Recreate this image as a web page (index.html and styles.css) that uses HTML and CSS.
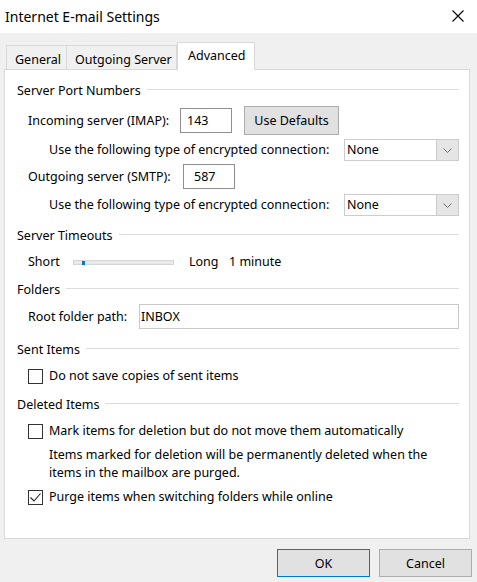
FILE: index.html
```html
<!DOCTYPE html>
<html>
<head>
<meta charset="utf-8">
<link rel="stylesheet" href="styles.css">
</head>
<body>
<div class="window">
  <div class="titlebar">
    <span class="title">Internet E-mail Settings</span>
    <svg class="close" width="12" height="12" viewBox="0 0 12 12"><path d="M0.5 0.5 L11.5 11.5 M11.5 0.5 L0.5 11.5" stroke="#000" stroke-width="1.1" fill="none"/></svg>
  </div>
  <div class="tabs">
    <div class="tab tab-general">General</div>
    <div class="tab tab-outgoing">Outgoing Server</div>
    <div class="tab tab-active">Advanced</div>
  </div>
  <div class="panel">
    <div class="group-title"><span>Server Port Numbers</span><i class="rule"></i></div>
    <div class="row row-incoming">
      <span class="label label-in">Incoming server (IMAP):</span>
      <div class="input port port-in">143</div>
      <div class="button defaults">Use Defaults</div>
    </div>
    <div class="row row-enc1">
      <span class="label">Use the following type of encrypted connection:</span>
      <div class="select"><span class="select-text">None</span><span class="select-arrow"><svg width="9" height="5" viewBox="0 0 9 5"><path d="M0.5 0.5 L4.5 4.5 L8.5 0.5" stroke="#6d6d6d" fill="none" stroke-width="1"/></svg></span></div>
    </div>
    <div class="row row-outgoing">
      <span class="label label-out">Outgoing server (SMTP):</span>
      <div class="input port port-out">587</div>
    </div>
    <div class="row row-enc2">
      <span class="label">Use the following type of encrypted connection:</span>
      <div class="select"><span class="select-text">None</span><span class="select-arrow"><svg width="9" height="5" viewBox="0 0 9 5"><path d="M0.5 0.5 L4.5 4.5 L8.5 0.5" stroke="#6d6d6d" fill="none" stroke-width="1"/></svg></span></div>
    </div>

    <div class="group-title gt-timeouts"><span>Server Timeouts</span><i class="rule"></i></div>
    <div class="row row-slider">
      <span class="label label-short">Short</span>
      <div class="track"><span class="thumb"></span></div>
      <span class="label label-long">Long</span>
      <span class="label">1 minute</span>
    </div>

    <div class="group-title gt-folders"><span>Folders</span><i class="rule"></i></div>
    <div class="row row-root">
      <span class="label label-root">Root folder path:</span>
      <div class="input root-input">INBOX</div>
    </div>

    <div class="group-title gt-sent"><span>Sent Items</span><i class="rule"></i></div>
    <div class="row row-check row-cb1">
      <span class="checkbox"></span>
      <span class="label">Do not save copies of sent items</span>
    </div>

    <div class="group-title gt-deleted"><span>Deleted Items</span><i class="rule"></i></div>
    <div class="row row-check row-cb2">
      <span class="checkbox"></span>
      <span class="label">Mark items for deletion but do not move them automatically</span>
    </div>
    <p class="note">Items marked for deletion will be permanently deleted when the<br>items in the mailbox are purged.</p>
    <div class="row row-check row-cb3">
      <span class="checkbox checked"><svg width="13" height="13" viewBox="0 0 13 13"><path d="M1.5 6.5 L5 10 L11.5 2.5" stroke="#222" stroke-width="1.1" fill="none"/></svg></span>
      <span class="label">Purge items when switching folders while online</span>
    </div>
  </div>
  <div class="footer">
    <div class="button btn-ok">OK</div>
    <div class="button btn-cancel">Cancel</div>
  </div>
</div>
</body>
</html>
```
FILE: styles.css
```css
html, body {
  margin: 0;
  padding: 0;
}
body {
  width: 477px;
  height: 582px;
  background: #f0f0f0;
  font-family: "Noto Sans", "Open Sans", sans-serif;
  font-size: 12.5px;
  color: #000;
  overflow: hidden;
}
.window {
  width: 477px;
  height: 582px;
  display: flex;
  flex-direction: column;
}
.titlebar {
  height: 33px;
  background: #fff;
  display: flex;
  align-items: center;
  padding-left: 5px;
  padding-right: 13px;
  flex-shrink: 0;
}
.title {
  font-size: 14px;
  flex: 1;
  padding-bottom: 1px;
}
.close {
  display: block;
  margin-top: -2px;
}
.tabs {
  display: flex;
  align-items: flex-end;
  margin-top: 9px;
  margin-left: 6px;
  height: 27px;
  flex-shrink: 0;
}
.tab {
  box-sizing: border-box;
  height: 24px;
  border: 1px solid #d9d9d9;
  border-bottom: none;
  background: #f0f0f0;
  padding: 5px 0 0 8px;
  line-height: 18px;
}
.tab-general {
  width: 61px;
}
.tab-outgoing {
  width: 110px;
  border-left: none;
}
.tab-active {
  position: relative;
  z-index: 1;
  width: 78px;
  height: 28px;
  margin-bottom: -1px;
  background: #fff;
  padding: 4px 0 0 10px;
}
.panel {
  box-sizing: border-box;
  margin-left: 4px;
  width: 466px;
  height: 470px;
  background: #fff;
  border: 1px solid #d9d9d9;
  padding: 12px 10px 0 12px;
  flex-shrink: 0;
}
.group-title {
  display: flex;
  align-items: center;
  height: 18px;
  line-height: 18px;
}
.group-title span {
  margin-right: 6px;
}
.rule {
  flex: 1;
  height: 0;
  border-top: 1px solid #dcdcdc;
  margin-top: -3px;
}
.row {
  display: flex;
  align-items: center;
  padding-left: 11px;
}
.label {
  white-space: nowrap;
  line-height: 18px;
}
.row-incoming {
  margin-top: 5px;
  height: 30px;
}
.label-in {
  width: 152px;
  padding-top: 2px;
}
.label-out {
  width: 155px;
  padding-top: 1px;
}
.input {
  box-sizing: border-box;
  height: 25px;
  border: 1px solid #8f8f8f;
  background: #fff;
  line-height: 23px;
}
.port {
  width: 52px;
}
.port-in {
  padding-left: 6px;
}
.port-out {
  padding-left: 10px;
}
.button {
  box-sizing: border-box;
  border: 1px solid #adadad;
  background: #e1e1e1;
  display: flex;
  align-items: center;
  justify-content: center;
}
.defaults {
  margin-left: 12px;
  width: 95px;
  height: 29px;
}
.row-enc1 {
  margin-top: 4px;
  height: 22px;
  padding-left: 32px;
}
.row-enc2 {
  margin-top: 5px;
  height: 22px;
  padding-left: 32px;
}
.select {
  margin-left: auto;
  box-sizing: border-box;
  width: 115px;
  height: 22px;
  border: 1px solid #cccccc;
  display: flex;
  background: #fff;
}
.select-text {
  flex: 1;
  padding-left: 2px;
  line-height: 20px;
}
.select-arrow {
  width: 21px;
  background: #e5e5e5;
  border-left: 1px solid #cccccc;
  display: flex;
  align-items: center;
  justify-content: center;
}
.select-arrow svg {
  display: block;
}
.row-outgoing {
  margin-top: 3px;
  height: 25px;
}
.gt-timeouts {
  margin-top: 11px;
}
.row-slider {
  margin-top: 8px;
  height: 18px;
}
.label-short {
  width: 45px;
}
.track {
  box-sizing: border-box;
  width: 101px;
  height: 5px;
  background: #e7eaea;
  border: 1px solid #d6d6d6;
  padding-left: 8px;
  display: flex;
}
.thumb {
  display: block;
  width: 3px;
  height: 4px;
  background: #0078d7;
}
.label-long {
  margin-left: 15px;
  width: 40px;
}
.gt-folders {
  margin-top: 10px;
}
.row-root {
  margin-top: 5px;
  height: 25px;
}
.label-root {
  width: 111px;
}
.root-input {
  flex: 1;
  border-color: #c8c8c8;
  padding-left: 1px;
}
.gt-sent {
  margin-top: 12px;
}
.row-check {
  height: 18px;
}
.checkbox {
  box-sizing: border-box;
  width: 15px;
  height: 15px;
  border: 1px solid #333;
  background: #fff;
  margin-right: 6px;
  display: flex;
  align-items: center;
  justify-content: center;
}
.checkbox svg {
  display: block;
}
.row-cb1 {
  margin-top: 8px;
}
.gt-deleted {
  margin-top: 11px;
}
.row-cb2 {
  margin-top: 8px;
}
.note {
  margin: 6px 0 0 0;
  padding-left: 32px;
  line-height: 18px;
}
.row-cb3 {
  margin-top: 6px;
}
.footer {
  display: flex;
  justify-content: flex-end;
  gap: 9px;
  margin-top: 10px;
  padding-right: 5px;
}
.footer .button {
  width: 93px;
  height: 28px;
}
.btn-ok {
  border-color: #0078d7;
}
```
